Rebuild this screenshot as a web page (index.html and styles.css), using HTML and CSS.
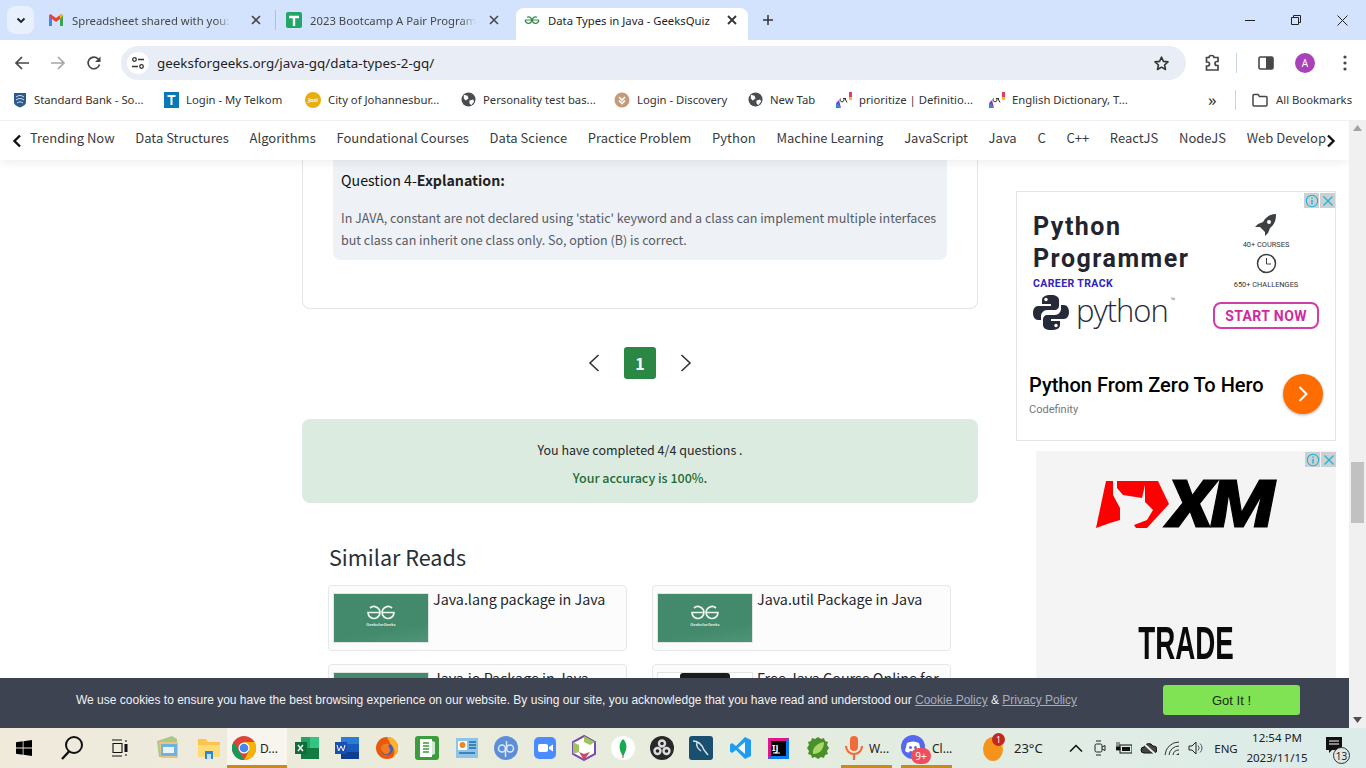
FILE: index.html
```html
<!DOCTYPE html>
<html lang="en">
<head>
<meta charset="utf-8">
<title>Data Types in Java - GeeksQuiz</title>
<link rel="stylesheet" href="styles.css">
</head>
<body>
<div class="window">
  <header class="tabstrip">
    <div class="tab-menu"><svg width="12" height="12" viewBox="0 0 12 12"><path d="M2.500 4.500 6 8l3.500-3.500" fill="none" stroke="#1f1f1f" stroke-width="1.800"/></svg></div>
    <div class="tab tab-one">
      <svg class="fav" width="16" height="16" viewBox="0 0 16 16"><path d="M1 3.500V14h3V7l4 3 4-3v7h3V3.500L13.500 2 8 6 2.500 2z" fill="#ea4335"/><path d="M1 3.500V14h3V7z" fill="#4285f4"/><path d="M15 3.500V14h-3V7z" fill="#34a853"/><path d="M12 7V3.100L13.500 2 15 3.500 12 7z" fill="#fbbc04"/></svg>
      <span class="tab-title fade">Spreadsheet shared with you: "2</span>
      <svg class="tab-x" width="10" height="10" viewBox="0 0 10 10"><path d="M1 1l8 8M9 1 1 9" stroke="#474747" stroke-width="1.600"/></svg>
    </div>
    <div class="tab-sep"></div>
    <div class="tab tab-two">
      <svg class="fav" width="16" height="16" viewBox="0 0 16 16"><rect width="16" height="16" rx="2" fill="#23a566"/><path d="M3 5h10M8 5v9" stroke="#fff" stroke-width="2.400"/></svg>
      <span class="tab-title fade">2023 Bootcamp A Pair Program</span>
      <svg class="tab-x" width="10" height="10" viewBox="0 0 10 10"><path d="M1 1l8 8M9 1 1 9" stroke="#474747" stroke-width="1.600"/></svg>
    </div>
    <div class="tab tab-active">
      <svg class="fav" width="16" height="16" viewBox="0 0 16 16"><g fill="none" stroke="#2f8d46" stroke-width="1.200"><path d="M3 5.300A3.200 3.200 0 1 1 1.300 8h6.200M13 5.300A3.200 3.200 0 1 0 14.700 8H8.500"/></g></svg>
      <span class="tab-title dark">Data Types in Java - GeeksQuiz</span>
      <svg class="tab-x" width="10" height="10" viewBox="0 0 10 10"><path d="M1 1l8 8M9 1 1 9" stroke="#333" stroke-width="1.800"/></svg>
    </div>
    <svg class="tab-plus" width="12" height="12" viewBox="0 0 12 12"><path d="M6 1v10M1 6h10" stroke="#333" stroke-width="1.500"/></svg>
    <div class="win-controls">
      <svg width="10" height="10" viewBox="0 0 10 10"><path d="M0 5.500h10" stroke="#222"/></svg>
      <svg width="10" height="10" viewBox="0 0 10 10"><path d="M.5 2.500h7v7h-7zM2.500 2.500V.5h7v7h-2" fill="none" stroke="#222"/></svg>
      <svg width="11" height="11" viewBox="0 0 11 11"><path d="M.5.5l10 10M10.500.5l-10 10" stroke="#222"/></svg>
    </div>
  </header>

  <nav class="toolbar">
    <svg class="tool" width="16" height="16" viewBox="0 0 16 16"><path d="M15 8H2M8 2 2 8l6 6" fill="none" stroke="#474747" stroke-width="1.700"/></svg>
    <svg class="tool" width="16" height="16" viewBox="0 0 16 16"><path d="M1 8h13M8 2l6 6-6 6" fill="none" stroke="#a5a7ab" stroke-width="1.700"/></svg>
    <svg class="tool" width="16" height="16" viewBox="0 0 16 16"><path d="M13.500 9.500A5.800 5.800 0 1 1 12 3.800L14 6" fill="none" stroke="#474747" stroke-width="1.700"/><path d="M14.500 1.500V7H9z" fill="#474747"/></svg>
    <div class="omnibox">
      <span class="site-chip"><svg width="14" height="14" viewBox="0 0 14 14"><g fill="none" stroke="#333" stroke-width="1.300"><circle cx="3.500" cy="3.500" r="1.800"/><path d="M7 3.500h6M1 10.500h6"/><circle cx="10.500" cy="10.500" r="1.800"/></g></svg></span>
      <span class="url">geeksforgeeks.org/java-gq/data-types-2-gq/</span>
      <svg class="star" width="17" height="17" viewBox="0 0 24 24"><path d="m12 3 2.700 6 6.500.7-4.900 4.400 1.400 6.400L12 17.200l-5.700 3.300 1.400-6.400-4.900-4.400 6.500-.7z" fill="none" stroke="#333" stroke-width="2.200" stroke-linejoin="round"/></svg>
    </div>
    <svg class="ext" width="18" height="18" viewBox="0 0 18 18"><path d="M6 3.500a2.500 2 0 0 1 5 0H15v4h-1a2 2 0 0 0 0 4h1v4.500H3.500V12h1a2 2 0 0 0 0-4h-1V3.500z" fill="none" stroke="#474747" stroke-width="1.700"/></svg>
    <span class="tool-sep"></span>
    <svg class="panel" width="16" height="16" viewBox="0 0 16 16"><rect x="1" y="2" width="14" height="12" rx="1.500" fill="none" stroke="#474747" stroke-width="1.600"/><rect x="8" y="2" width="7" height="12" fill="#474747"/></svg>
    <span class="avatar">A</span>
    <svg class="dots" width="4" height="16" viewBox="0 0 4 16"><g fill="#474747"><circle cx="2" cy="2" r="1.600"/><circle cx="2" cy="8" r="1.600"/><circle cx="2" cy="14" r="1.600"/></g></svg>
  </nav>

  <div class="bookmarks">
    <span class="bm bm1"><svg width="16" height="16" viewBox="0 0 16 16"><path d="M2 1h12v9c0 3-3 4-6 5.500C5 14 2 13 2 10z" fill="#2d5a8c"/><path d="M4 5c3-2 5-2 8 0M4 8c3-2 5-2 8 0M5 11c2-1.500 4-1.500 6 0" stroke="#cfe0ef" fill="none"/></svg>Standard Bank - So...</span>
    <span class="bm bm2"><svg width="15" height="16" viewBox="0 0 15 16"><rect width="15" height="16" fill="#0878b8"/><path d="M3.500 4h8M7.500 4v9" stroke="#fff" stroke-width="2"/></svg>Login - My Telkom</span>
    <span class="bm bm3"><span class="jozi">Jozi</span>City of Johannesbur...</span>
    <span class="bm bm4"><svg width="15" height="15" viewBox="0 0 16 16"><circle cx="8" cy="8" r="7.500" fill="#4a4d50"/><path d="M3 3l4 1 1 3-3 2-2-2zM9 9l4-1 1 2-3 4-2-2z" fill="#fff"/></svg>Personality test bas...</span>
    <span class="bm bm5"><svg width="16" height="16" viewBox="0 0 16 16"><circle cx="8" cy="8" r="7.500" fill="#c49a78"/><path d="M5 5l3 3 3-3M5 8.500l3 3 3-3" stroke="#fff" stroke-width="1.600" fill="none"/></svg>Login - Discovery</span>
    <span class="bm bm6"><svg width="15" height="15" viewBox="0 0 16 16"><circle cx="8" cy="8" r="7.500" fill="#4a4d50"/><path d="M3 3l4 1 1 3-3 2-2-2zM9 9l4-1 1 2-3 4-2-2z" fill="#fff"/></svg>New Tab</span>
    <span class="bm bm7"><svg width="16" height="16" viewBox="0 0 16 16"><path d="M0 16v-5l5 5z" fill="#1a8fd8"/><path d="M0 11l3-3 2 8z" fill="#7a3ec0"/><path d="M13 0h3v5h-3z" fill="#e83a5c"/><path d="M13 5h3v3h-3z" fill="#f0c020"/><path d="M4.500 6.500a2 2 0 1 0 3 0M7 6.500h3M9 6.500l2 4" fill="none" stroke="#333"/></svg>prioritize | Definitio...</span>
    <span class="bm bm8"><svg width="16" height="16" viewBox="0 0 16 16"><path d="M0 16v-5l5 5z" fill="#1a8fd8"/><path d="M0 11l3-3 2 8z" fill="#7a3ec0"/><path d="M13 0h3v5h-3z" fill="#e83a5c"/><path d="M13 5h3v3h-3z" fill="#f0c020"/><path d="M4.500 6.500a2 2 0 1 0 3 0M7 6.500h3M9 6.500l2 4" fill="none" stroke="#333"/></svg>English Dictionary, T...</span>
    <span class="bm-more">»</span>
    <span class="bm-sep"></span>
    <span class="bm bm-all"><svg width="16" height="14" viewBox="0 0 16 14"><path d="M1 2.500a1 1 0 0 1 1-1h4l1.500 2H14a1 1 0 0 1 1 1V12a1 1 0 0 1-1 1H2a1 1 0 0 1-1-1z" fill="none" stroke="#474747" stroke-width="1.500"/></svg>All Bookmarks</span>
  </div>

  <div class="page">
    <div class="page-main">
      <div class="topnav">
        <svg class="nav-arrow" width="10" height="14" viewBox="0 0 10 14"><path d="M8 1.500 2.500 7 8 12.500" fill="none" stroke="#111" stroke-width="2.400"/></svg>
        <div class="nav-items">
          <span>Trending Now</span><span>Data Structures</span><span>Algorithms</span><span>Foundational Courses</span><span>Data Science</span><span>Practice Problem</span><span>Python</span><span>Machine Learning</span><span>JavaScript</span><span>Java</span><span>C</span><span>C++</span><span>ReactJS</span><span>NodeJS</span><span>Web Development</span>
        </div>
        <svg class="nav-arrow" width="10" height="14" viewBox="0 0 10 14"><path d="M2 1.500 7.500 7 2 12.500" fill="none" stroke="#111" stroke-width="2.400"/></svg>
      </div>
      <div class="content">
        <main class="center">
          <section class="card">
            <div class="explain">
              <h3>Question 4-<b>Explanation:</b></h3>
              <p>In JAVA, constant are not declared using 'static' keyword and a class can implement multiple interfaces but class can inherit one class only. So, option (B) is correct.</p>
            </div>
          </section>
          <div class="pager">
            <span class="pg-arrow"><svg width="12" height="20" viewBox="0 0 12 20"><path d="M10.500 2 2 10l8.500 8" fill="none" stroke="#333" stroke-width="1.600"/></svg></span>
            <span class="pg-num">1</span>
            <span class="pg-arrow"><svg width="12" height="20" viewBox="0 0 12 20"><path d="M1.500 2 10 10l-8.500 8" fill="none" stroke="#333" stroke-width="1.600"/></svg></span>
          </div>
          <div class="result">
            <p>You have completed 4/4 questions .</p>
            <p class="acc">Your accuracy is 100%.</p>
          </div>
          <section class="similar">
            <h2>Similar Reads</h2>
            <div class="sim-grid">
              <article class="sim"><div class="thumb"><svg width="30" height="15" viewBox="0 0 30 15"><g fill="none" stroke="#eef6f1" stroke-width="1.700"><path d="M4 3A6 6 0 1 1 2 7.500h12M26 3a6 6 0 1 0 2 4.500H16"/></g></svg><span class="thumb-cap">GeeksforGeeks</span></div><h4>Java.lang package in Java</h4></article>
              <article class="sim"><div class="thumb"><svg width="30" height="15" viewBox="0 0 30 15"><g fill="none" stroke="#eef6f1" stroke-width="1.700"><path d="M4 3A6 6 0 1 1 2 7.500h12M26 3a6 6 0 1 0 2 4.500H16"/></g></svg><span class="thumb-cap">GeeksforGeeks</span></div><h4>Java.util Package in Java</h4></article>
              <article class="sim"><div class="thumb"></div><h4>Java.io Package in Java</h4></article>
              <article class="sim"><div class="thumb thumb-light"><span class="dark-block"></span></div><h4>Free Java Course Online for</h4></article>
            </div>
          </section>
        </main>
        <aside class="ads">
          <div class="ad ad-one">
            <div class="ad-badges"><span class="ad-b"><svg width="14" height="14" viewBox="0 0 14 14"><circle cx="7" cy="7" r="5.700" fill="none" stroke="#1bb3d6" stroke-width="1.100"/><path d="M7 6v4.500M7 3.500v1.200" stroke="#1bb3d6" stroke-width="1.400"/></svg></span><span class="ad-b"><svg width="12" height="12" viewBox="0 0 12 12"><path d="M1.500 1.500l9 9M10.500 1.500l-9 9" stroke="#1bb3d6" stroke-width="1.300"/></svg></span></div>
            <div class="ad-art">
              <div class="art-left">
                <div class="art-head">Python<br>Programmer</div>
                <div class="art-track">CAREER TRACK</div>
                <div class="art-logo">
                  <svg width="36" height="37" viewBox="0 0 36 37"><path d="M18 1c-6 0-9 2-9 5v4h9v2H5c-3 0-5 3-5 7s2 7 5 7h3v-4c0-3 3-6 6-6h8c2 0 4-2 4-4V6c0-3-3-5-8-5z" fill="#262b3a"/><path d="M18 36c6 0 9-2 9-5v-4h-9v-2h13c3 0 5-3 5-7s-2-7-5-7h-3v4c0 3-3 6-6 6h-8c-2 0-4 2-4 4v6c0 3 3 5 8 5z" fill="#262b3a"/><circle cx="13" cy="5.500" r="1.700" fill="#fff"/><circle cx="23" cy="31.500" r="1.700" fill="#fff"/></svg>
                  <span class="art-word">python<sup>™</sup></span>
                </div>
              </div>
              <div class="art-right">
                <svg width="22" height="22" viewBox="0 0 22 22"><path d="M21 0c-6 0-10 3-13 8L3 10l-3 3 5 0 5 5v4l3-3 2-5c4-3 6-7 6-14z" fill="#3c4043"/><circle cx="14" cy="8" r="2" fill="#fff"/></svg>
                <span class="art-small first">40+ COURSES</span>
                <svg class="art-clock" width="21" height="21" viewBox="0 0 21 21"><circle cx="10.500" cy="10.500" r="9" fill="none" stroke="#3c4043" stroke-width="1.500"/><path d="M10.500 5v6H15" fill="none" stroke="#3c4043"/></svg>
                <span class="art-small second">650+ CHALLENGES</span>
                <span class="art-btn">START NOW</span>
              </div>
            </div>
            <div class="ad-foot">
              <div class="foot-text"><div class="foot-title">Python From Zero To Hero</div><div class="foot-sub">Codefinity</div></div>
              <span class="foot-go"><svg width="12" height="20" viewBox="0 0 12 20"><path d="M2.500 3 9.500 10l-7 7" fill="none" stroke="#fff" stroke-width="2"/></svg></span>
            </div>
          </div>
          <div class="ad ad-two">
            <div class="ad-badges"><span class="ad-b"><svg width="14" height="14" viewBox="0 0 14 14"><circle cx="7" cy="7" r="5.700" fill="none" stroke="#1bb3d6" stroke-width="1.100"/><path d="M7 6v4.500M7 3.500v1.200" stroke="#1bb3d6" stroke-width="1.400"/></svg></span><span class="ad-b"><svg width="12" height="12" viewBox="0 0 12 12"><path d="M1.500 1.500l9 9M10.500 1.500l-9 9" stroke="#1bb3d6" stroke-width="1.300"/></svg></span></div>
            <div class="xm">
              <svg width="74" height="47" viewBox="0 0 74 47"><path d="M10 0h7v14l7 13v12l-10 3-14 5z" fill="#f00"/><path d="M21 0h41l11 23-22 24H40l-2-3 13-5 6-10-8-8V4l-3 13-19-3-6-7z" fill="#f00"/></svg>
              <span class="xm-word">XM</span>
            </div>
            <div class="trade"><span>TRADE</span></div>
          </div>
        </aside>
      </div>
    </div>
    <div class="scrollbar">
      <svg width="9" height="6" viewBox="0 0 9 6"><path d="M4.500 0 9 6H0z" fill="#a3a3a3"/></svg>
      <span class="thumb-bar"></span>
      <svg class="sb-down" width="9" height="6" viewBox="0 0 9 6"><path d="M4.500 6 9 0H0z" fill="#505050"/></svg>
    </div>
    <div class="cookie">
      <p>We use cookies to ensure you have the best browsing experience on our website. By using our site, you acknowledge that you have read and understood our <a>Cookie Policy</a> &amp; <a>Privacy Policy</a></p>
      <span class="got">Got It !</span>
    </div>
  </div>

  <footer class="taskbar">
    <div class="tb-slot s-win"><svg width="16" height="16" viewBox="0 0 16 16"><path d="M0 2.300 6.700 1.300v6.200H0zM7.500 1.200 16 0v7.500H7.500zM0 8.500h6.700v6.200L0 13.700zM7.500 8.500H16V16l-8.500-1.200z" fill="#000"/></svg></div>
    <div class="tb-slot s-48"><svg width="24" height="26" viewBox="0 0 24 26"><circle cx="14" cy="10" r="8" fill="none" stroke="#111" stroke-width="2"/><path d="M9 16.500 2 24" stroke="#111" stroke-width="2.400"/></svg></div>
    <div class="tb-slot s-48"><svg width="16" height="18" viewBox="0 0 16 18"><g fill="none" stroke="#111" stroke-width="1.100"><path d="M0 1h10M0 17h10M1 4.500h9v9H1zM14 1v2M14 15v2"/></g><rect x="12.500" y="5" width="3" height="8" fill="#111"/></svg></div>
    <div class="tb-slot s-47"><svg width="24" height="24" viewBox="0 0 24 24"><path d="M1 5 16 0l5 3v18H3z" fill="#a9c98c"/><path d="M3 6h19v16H5z" fill="#ebc47d"/><rect x="5" y="8" width="16" height="12" fill="#6db2e0"/><path d="M7 11h11v6H7z" fill="#e9f3fb"/></svg></div>
    <div class="tb-slot s-38"><svg width="22" height="22" viewBox="0 0 22 22"><path d="M0 2h8l2 3h12v15H0z" fill="#fcc44c"/><path d="M0 8h22v12H0z" fill="#fedb74"/><path d="M7 14h8v8H7z" fill="#2d87d2"/><path d="M9 17h4v5H9z" fill="#bfe0f8"/></svg></div>
    <div class="tb-active tb-chrome">
      <svg width="24" height="24" viewBox="0 0 24 24"><circle cx="12" cy="12" r="12" fill="#db4437"/><path d="M12 24A12 12 0 0 1 1.600 6L7 15.500z" fill="#0f9d58"/><path d="M12 24a12 12 0 0 0 10.400-18H12l5 9z" fill="#f4b400"/><circle cx="12" cy="12" r="5.500" fill="#fff"/><circle cx="12" cy="12" r="4.300" fill="#4285f4"/></svg>
      <span>D...</span>
    </div>
    <div class="tb-slot s-40"><svg width="24" height="24" viewBox="0 0 24 24"><rect x="6" y="1" width="18" height="22" fill="#21a366"/><rect x="15" y="1" width="9" height="11" fill="#33c481"/><rect x="6" y="12" width="18" height="11" fill="#107c41"/><rect y="6" width="12" height="12" fill="#0e6e39"/><path d="M3 9l5 6M8 9l-5 6" stroke="#fff" stroke-width="1.400"/></svg></div>
    <div class="tb-slot s-40"><svg width="24" height="24" viewBox="0 0 24 24"><rect x="6" y="1" width="18" height="22" fill="#2b7cd3"/><rect x="6" y="8" width="18" height="8" fill="#185abd"/><rect x="6" y="16" width="18" height="7" fill="#103f91"/><rect y="6" width="12" height="12" fill="#1a4fb0"/><path d="M2 9l1.700 6L6 10l2.300 5L10 9" stroke="#fff" fill="none"/></svg></div>
    <div class="tb-slot s-40"><svg width="24" height="24" viewBox="0 0 24 24"><circle cx="12" cy="12" r="11" fill="#e8590c"/><path d="M12 1a11 11 0 0 1 11 11c0 4-2 8-6 10 4-4 3-10-1-13z" fill="#ffb02e"/><circle cx="12" cy="13" r="6" fill="#3d5fb5"/><path d="M6 13c0-5 5-7 9-5-2 1-2 3 0 5 1 3-2 6-5 5-2-1-4-3-4-5z" fill="#f47a21"/></svg></div>
    <div class="tb-slot s-40"><svg width="24" height="24" viewBox="0 0 24 24"><rect width="24" height="24" rx="3" fill="#3d9c3d"/><rect x="5" y="3" width="12" height="18" fill="#fff"/><path d="M8 7h6M8 10h6M8 13h6M8 16h6" stroke="#3d9c3d" stroke-width="1.500"/><path d="M17 5l3 1v12l-3 1z" fill="#cfe8cf"/></svg></div>
    <div class="tb-slot s-39"><svg width="22" height="22" viewBox="0 0 22 22"><rect y="1" width="22" height="20" fill="#8ec5e6"/><rect x="2" y="4" width="9" height="9" fill="#fff"/><circle cx="6.500" cy="8" r="3" fill="#e68a2e"/><path d="M13 5h7M13 8h7M13 11h7M3 16h16" stroke="#1d6fb0" stroke-width="1.500"/></svg></div>
    <div class="tb-slot s-39"><svg width="24" height="24" viewBox="0 0 24 24"><circle cx="12" cy="12" r="12" fill="#5d8fd8"/><g fill="none" stroke="#dbe8fa" stroke-width="1.500"><circle cx="8" cy="12.500" r="3.500"/><path d="M11.500 11v10"/><circle cx="16" cy="12.500" r="3.500"/><path d="M12.500 5v9"/></g></svg></div>
    <div class="tb-slot s-39"><svg width="22" height="22" viewBox="0 0 22 22"><rect width="22" height="22" rx="5" fill="#4a8cff"/><rect x="4" y="7" width="10" height="8" rx="2" fill="#fff"/><path d="M15 10l4-2.500v7L15 12z" fill="#fff"/></svg></div>
    <div class="tb-slot s-39"><svg width="24" height="26" viewBox="0 0 24 26"><path d="M12 1 23 7v12l-11 6L1 19V7z" fill="#fff" stroke="#7b4bb0" stroke-width="2"/><path d="M12 1 23 7l-5 3-6-3z" fill="#9ec55a"/><path d="M1 7l6 3v7l-6 2z" fill="#9ec55a"/><path d="M12 25l-5-8 5 2 6-2z" fill="#c84a5a"/></svg></div>
    <div class="tb-slot s-39"><svg width="24" height="24" viewBox="0 0 24 24"><circle cx="12" cy="12" r="12" fill="#fff"/><path d="M12 3c4 4 5 10 0 17-5-7-4-13 0-17z" fill="#13aa52"/><path d="M12 18v4" stroke="#7b5c3d"/></svg></div>
    <div class="tb-slot s-39"><svg width="24" height="24" viewBox="0 0 24 24"><circle cx="12" cy="12" r="12" fill="#282828"/><g fill="none" stroke="#ddd" stroke-width="2.400"><circle cx="12" cy="7.500" r="3"/><circle cx="7.500" cy="15" r="3"/><circle cx="16.500" cy="15" r="3"/></g></svg></div>
    <div class="tb-slot s-39"><svg width="24" height="24" viewBox="0 0 24 24"><rect width="24" height="24" rx="3" fill="#1a4f70"/><path d="M4 5c5 0 9 4 11 9l4 5M8 6c-1 4 1 7 4 9" fill="none" stroke="#d8e6ee" stroke-width="1.400"/></svg></div>
    <div class="tb-slot s-39"><svg width="24" height="26" viewBox="0 0 24 24"><path d="M17 1 23 4v16l-6 3-9-9-4 3-2-1.500V8.500L4 7l4 3z" fill="#1f9cf0"/><path d="M17 6v12l-7-6z" fill="#f3f8fc"/></svg></div>
    <div class="tb-slot s-39"><svg width="21" height="21" viewBox="0 0 21 21"><rect width="21" height="21" fill="#e0178c"/><path d="M0 21 21 0v21z" fill="#087cfa"/><rect x="3" y="3" width="15" height="15" fill="#000"/><path d="M5 15h7" stroke="#fff"/></svg><span class="ij">IJ</span></div>
    <div class="tb-slot s-39"><svg width="24" height="24" viewBox="0 0 24 24"><path d="M12 1l3 2 3-1 1 3 3 1-1 3 2 3-2 3 1 3-3 1-1 3-3-1-3 2-3-2-3 1-1-3-3-1 1-3-2-3 2-3-1-3 3-1 1-3 3 1z" fill="#4a8f2a"/><path d="M7 18c-1-6 4-11 11-12 0 7-4 12-11 12z" fill="#a9d86a"/></svg></div>
    <div class="tb-active tb-mic">
      <svg width="20" height="26" viewBox="0 0 20 26"><rect x="6" y="1" width="8" height="15" rx="4" fill="#f26b3a"/><path d="M2 11a8 8 0 0 0 16 0M10 19v6" fill="none" stroke="#f26b3a" stroke-width="2.200"/></svg>
      <span>W...</span>
    </div>
    <div class="tb-active tb-disc">
      <svg class="disc" width="26" height="26" viewBox="0 0 26 26"><circle cx="12" cy="12" r="12" fill="#5568ee"/><path d="M6 8c4-2 8-2 12 0l2 8c-1.500 1-3 1.500-4 1.500l-1-1.500c-2 .5-4 .5-6 0l-1 1.500c-1 0-2.500-.5-4-1.500z" fill="#fff"/><circle cx="9.500" cy="12.500" r="1.500" fill="#5568ee"/><circle cx="14.500" cy="12.500" r="1.500" fill="#5568ee"/></svg>
      <span class="disc-badge">9+</span>
      <span>Cl...</span>
    </div>
    <div class="weather">
      <svg width="24" height="26" viewBox="0 0 24 26"><ellipse cx="11" cy="14" rx="10" ry="12" fill="#f5941d"/><path d="M11 2c6 0 10 6 10 12-3-6-7-10-10-12z" fill="#f7c235"/></svg>
      <span class="w-badge">1</span>
      <span class="temp">23°C</span>
    </div>
    <div class="tray">
      <span class="tray-i"><svg width="14" height="8" viewBox="0 0 14 8"><path d="M1 7.500 7 1.500l6 6" fill="none" stroke="#111" stroke-width="1.500"/></svg></span>
      <span class="tray-i"><svg width="12" height="18" viewBox="0 0 12 18"><rect x="1" y="5" width="7" height="8" rx="1.500" fill="none" stroke="#222"/><path d="M8 8l3-1.500v5L8 10M2 2h5M2 16h5" fill="none" stroke="#222"/></svg></span>
      <span class="tray-i"><svg width="16" height="14" viewBox="0 0 16 14"><rect x="4" y="4" width="12" height="8" fill="none" stroke="#111"/><rect x="6" y="6" width="8" height="4" fill="#111"/><path d="M1 1v5M3 1v5M0 6h4v3H0z" fill="#111" stroke="#111" stroke-width=".8"/></svg></span>
      <span class="tray-i"><svg width="17" height="14" viewBox="0 0 17 14"><path d="M4 12a3 3 0 0 1 0-6 5 5 0 0 1 9-1 3.500 3.500 0 0 1 1 7z" fill="#444" stroke="#111"/><path d="M2 1l13 12" stroke="#eee" stroke-width="1.800"/></svg></span>
      <span class="tray-i"><svg width="16" height="15" viewBox="0 0 16 15"><g fill="none" stroke="#333"><path d="M15 1A14 14 0 0 0 1 14M15 5A10 10 0 0 0 5 14M15 9a6 6 0 0 0-6 5"/></g><path d="M15 12v2h-3z" fill="#333"/></svg></span>
      <span class="tray-i"><svg width="16" height="16" viewBox="0 0 16 16"><path d="M1 6h3l4-4v12l-4-4H1z" fill="none" stroke="#222"/><path d="M10 5.500a3.500 3.500 0 0 1 0 5M12 3.500a6 6 0 0 1 0 9" fill="none" stroke="#555"/></svg></span>
    </div>
    <span class="lang">ENG</span>
    <div class="clock"><span>12:54 PM</span><span>2023/11/15</span></div>
    <div class="notif">
      <svg width="16" height="16" viewBox="0 0 16 16"><path d="M0 0h16v13H6l-3 3v-3H0z" fill="#111"/><path d="M3 4h10M3 7h10" stroke="#fff"/></svg>
      <span class="notif-n">13</span>
    </div>
  </footer>
</div>
</body>
</html>
```
FILE: styles.css
```css
* { box-sizing: border-box; }
html, body { margin: 0; padding: 0; height: 100%; overflow: hidden; }
body { font-family: "Noto Sans", "Open Sans", sans-serif; color: #202124; background: #fff; }
p, h2, h3, h4 { margin: 0; font-weight: 400; }
svg { display: block; flex: none; }

.window { width: 1366px; height: 768px; display: flex; flex-direction: column; }

/* tab strip */
.tabstrip { height: 40px; background: #d3e3fd; display: flex; align-items: flex-end; padding-left: 7px; flex: none; }
.tab-menu { width: 27px; height: 28px; margin-bottom: 6px; background: #e8f0fe; border-radius: 8px; display: flex; align-items: center; justify-content: center; }
.tab { height: 32px; display: flex; align-items: center; font-size: 11.300px; padding-bottom: 8px; flex: none; }
.tab-one { width: 235px; padding-left: 8px; margin-left: 6px; }
.tab-two { width: 240px; padding-left: 10px; }
.tab .fav { margin-right: 8px; }
.tab-title { width: 160px; white-space: nowrap; overflow: hidden; color: #444746; }
.tab-two .tab-title { width: 166px; }
.tab-title.fade { -webkit-mask-image: linear-gradient(90deg, #000 90%, transparent); mask-image: linear-gradient(90deg, #000 90%, transparent); }
.tab-title.dark { color: #1f1f1f; width: 170px; }
.tab-x { margin-left: 19px; }
.tab-two .tab-x { margin-left: 13px; }
.tab-active .tab-x { margin-left: 9px; }
.tab-sep { width: 1px; height: 20px; background: #a7c0e6; margin-bottom: 10px; flex: none; }
.tab-active { width: 232px; padding-left: 8px; background: #fff; border-radius: 8px 8px 0 0; }
.tab-plus { margin: 0 0 14px 14px; }
.win-controls { margin-left: auto; display: flex; align-items: center; gap: 36px; height: 40px; padding-right: 18px; width: 118px; justify-content: flex-end; }

/* toolbar */
.toolbar { height: 40px; background: #fff; border-radius: 8px 8px 0 0; display: flex; align-items: center; padding-left: 14px; flex: none; }
.tool { margin-right: 20px; }
.omnibox { width: 1065px; height: 34px; margin: 6px 0 0 -1px; background: #e9eef6; border-radius: 17px; display: flex; align-items: center; padding: 0 16px 0 6px; }
.toolbar > svg, .toolbar > span { margin-top: 6px; }
.site-chip { width: 22px; height: 22px; border-radius: 50%; background: #fff; display: flex; align-items: center; justify-content: center; }
.url { margin-left: 8px; font-size: 13.400px; color: #1f1f1f; flex: 1; }
.ext { margin-left: 17px; }
.tool-sep { width: 1px; height: 20px; background: #c9d7ec; margin-left: 15px; }
.panel { margin-left: 21px; }
.avatar { width: 20px; height: 20px; border-radius: 50%; background: #a942b8; color: #fff; font-size: 10px; display: flex; align-items: center; justify-content: center; margin-left: 21px; }
.dots { margin-left: 28px; }

/* bookmarks */
.bookmarks { height: 40px; background: #fff; display: flex; align-items: center; font-size: 11.300px; color: #333; flex: none; padding-bottom: 1px; }
.bm { display: flex; align-items: center; gap: 7px; white-space: nowrap; flex: none; }
.bm1 { width: 152px; margin-left: 12px; gap: 6px; }
.bm2 { width: 141px; }
.bm3 { width: 156px; }
.jozi { width: 16px; height: 16px; border-radius: 50%; background: #e8ae0c; color: #fff; font-size: 5.500px; font-weight: 700; display: flex; align-items: center; justify-content: center; flex: none; }
.bm4 { width: 153px; }
.bm5 { width: 134px; }
.bm6 { width: 88px; }
.bm7 { width: 153px; }
.bm8 { width: 219px; }
.bm-more { width: 16px; font-size: 17px; line-height: 18px; color: #333; flex: none; }
.bm-sep { width: 1px; height: 20px; background: #c9d7ec; margin-left: 11px; flex: none; }
.bm-all { margin-left: 16px; gap: 8px; }

/* page */
.page { position: relative; height: 608px; display: flex; overflow: hidden; flex: none; font-family: "Noto Sans CJK SC", "Noto Sans", sans-serif; }
.page-main { flex: 1; min-width: 0; display: flex; flex-direction: column; }
.topnav { height: 40px; flex: none; display: flex; align-items: center; background: #fff; padding-left: 12px; box-shadow: 0 2px 10px rgba(0,0,0,.08); position: relative; z-index: 2; border-top: 1px solid #f0f0f0; }
.nav-arrow { margin-top: 1px; }
.nav-items { display: flex; gap: 20.700px; font-size: 13px; line-height: 20px; color: #373c43; margin: -6px 0 0 8px; width: 1296px; overflow: hidden; white-space: nowrap; }
.nav-items span { flex: none; }
.content { flex: 1; display: flex; padding-left: 302px; min-height: 0; }
.center { width: 676px; flex: none; }

.card { height: 149px; padding: 0 30px; border: 1px solid #e2e4e8; border-top: 0; border-radius: 0 0 8px 8px; }
.explain { height: 100px; width: 614px; background: #eef1f5; border-radius: 0 0 8px 8px; padding: 9px 8px; }
.explain h3 { font-size: 14.200px; line-height: 22px; color: #111; }
.explain b { font-weight: 700; color: #222; }
.explain p { margin-top: 16px; font-size: 12.520px; line-height: 22px; color: #555c66; }

.pager { height: 32px; margin-top: 38px; display: flex; justify-content: center; align-items: center; gap: 24px; }
.pg-arrow { width: 12px; display: flex; }
.pg-num { width: 32px; height: 32px; background: #2a8744; border-radius: 3px; color: #fff; font-weight: 700; font-size: 16px; display: flex; align-items: center; justify-content: center; }

.result { height: 84px; margin-top: 40px; background: #dcebdf; border-radius: 8px; text-align: center; font-size: 12.500px; line-height: 28px; padding-top: 17px; color: #24282e; }
.result .acc { color: #1e6b35; font-weight: 500; }

.similar { padding: 0 27px 0 26px; margin-top: 37px; }
.similar h2 { font-size: 21.600px; line-height: 34px; color: #2a2f36; padding-left: 1px; }
.sim-grid { margin-top: 11px; display: grid; grid-template-columns: 299px 299px; column-gap: 25px; row-gap: 13px; }
.sim { height: 66px; border: 1px solid #e6e7ea; border-radius: 4px; background: #fcfcfc; display: flex; padding: 7px 4px; gap: 4px; }
.sim h4 { font-size: 14.300px; line-height: 16px; color: #23272d; white-space: nowrap; margin-top: -2px; }
.thumb { width: 96px; height: 50px; background: linear-gradient(170deg, #43896b 70%, #4f9478); border: 1px solid #e2e4e4; display: flex; flex-direction: column; align-items: center; justify-content: flex-start; padding-top: 11px; flex: none; }
.thumb-cap { font-size: 4px; line-height: 5px; margin-top: 2px; font-weight: 700; color: #e8f2ec; font-family: "Liberation Sans", sans-serif; }
.thumb-light { background: #fff; padding-top: 0; }
.dark-block { width: 50px; height: 50px; background: #1b1b1b; border-radius: 3px; }

/* ads */
.ads { width: 320px; margin-left: 38px; padding-top: 31px; display: flex; flex-direction: column; align-items: flex-end; gap: 10px; }
.ad { position: relative; flex: none; }
.ad-badges { position: absolute; top: 1px; right: 0; display: flex; gap: 1px; }
.ad-b { width: 15px; height: 15px; background: #cdd0d2; display: flex; align-items: center; justify-content: center; }
.ad-one { width: 320px; height: 250px; border: 1px solid #e3e3e3; background: #fff; font-family: Roboto, sans-serif; }
.ad-art { display: flex; height: 140px; padding: 19px 0 0 16px; }
.art-left { width: 180px; flex: none; }
.art-head { font-size: 25px; font-weight: 700; line-height: 32px; color: #22252e; letter-spacing: 1.500px; white-space: nowrap; }
.art-track { font-size: 10.500px; font-weight: 700; letter-spacing: .4px; line-height: 12px; margin-top: 3px; color: #3322bb; }
.art-logo { display: flex; align-items: center; gap: 7px; margin-top: 4px; }
.art-word { font-size: 31px; font-weight: 300; line-height: 36px; color: #262b3a; font-family: "Open Sans", sans-serif; letter-spacing: -1px; white-space: nowrap; margin-top: -5px; }
.art-word sup { font-size: 6px; vertical-align: 20px; line-height: 0; margin-left: 3px; }
.art-right { width: 106px; padding-top: 3px; display: flex; flex-direction: column; align-items: center; flex: none; }
.art-small { font-size: 7.400px; line-height: 8px; color: #333; white-space: nowrap; }
.art-small.first { margin-top: 5px; }
.art-small.second { margin-top: 7px; }
.art-clock { margin-top: 4px; }
.art-btn { width: 106px; height: 27px; margin-top: 13px; border: 2px solid #d23ba8; border-radius: 8px; display: flex; align-items: center; justify-content: center; font-size: 14px; font-weight: 700; color: #cf2a9e; letter-spacing: .4px; }
.ad-foot { display: flex; justify-content: space-between; padding: 42px 12px 0 12px; }
.foot-text { margin-top: -1px; }
.foot-title { font-size: 20px; font-weight: 500; line-height: 24px; color: #000; white-space: nowrap; }
.foot-sub { font-size: 11px; line-height: 14px; color: #777; margin-top: 6px; }
.foot-go { width: 40px; height: 40px; border-radius: 50%; background: #ff6d00; display: flex; align-items: center; justify-content: center; box-shadow: 0 1px 3px rgba(0,0,0,.3); }

.ad-two { width: 300px; height: 300px; background: #f4f4f4; padding-top: 30px; display: flex; flex-direction: column; align-items: center; }
.xm { display: flex; align-items: center; height: 47px; }
.xm-word { font-family: Roboto, "Liberation Sans", sans-serif; font-size: 66px; font-weight: 900; font-style: italic; line-height: 47px; color: #000; letter-spacing: -3px; width: 110px; margin-left: -3px; -webkit-text-stroke: 1px #000; transform: scaleX(1.146); transform-origin: left center; }
.trade { margin-top: 90px; font-family: "Liberation Sans", sans-serif; font-size: 47px; font-weight: 700; line-height: 50px; color: #0a0a0a; width: 94px; display: flex; justify-content: center; }
.trade span { display: block; transform: scaleX(.59); }

/* scrollbar */
.scrollbar { width: 17px; flex: none; background: #f0f0f0; display: flex; flex-direction: column; align-items: center; padding: 5px 0; position: relative; z-index: 3; }
.thumb-bar { width: 13px; height: 61px; background: #c1c1c1; margin-top: 331px; }
.sb-down { margin-top: auto; }

/* cookie */
.cookie { position: absolute; left: 0; right: 17px; bottom: 0; height: 50px; background: #3e4351; z-index: 4; display: flex; align-items: center; padding: 0 0 6px 76px; font-family: "Liberation Sans", Arial, sans-serif; font-size: 12px; color: #fff; }
.cookie p { width: 1087px; white-space: nowrap; color: #f1f1f1; }
.cookie a { color: #a9adb8; text-decoration: underline; }
.got { width: 137px; height: 30px; border-radius: 3px; background: #7fe354; color: #1b2a12; font-size: 13px; display: flex; align-items: center; justify-content: center; }

/* taskbar */
.taskbar { height: 40px; flex: none; display: flex; align-items: center; background: linear-gradient(90deg, #f0eadb 0%, #e8ecdc 45%, #dcecea 100%); font-size: 12px; color: #222; }
.tb-slot { height: 40px; display: flex; align-items: center; justify-content: center; flex: none; position: relative; }
.s-win { width: 48px; }
.s-48 { width: 48px; }
.s-47 { width: 47px; }
.s-38 { width: 36px; }
.s-40 { width: 40px; }
.s-39 { width: 39px; }
.ij { position: absolute; font-size: 9px; font-weight: 700; color: #fff; top: 13px; left: 13px; }
.tb-active { height: 40px; display: flex; align-items: center; flex: none; border-bottom: 3px solid #c98a1e; padding-top: 3px; }
.tb-chrome { width: 60px; background: #f7f5ee; padding-left: 5px; gap: 4px; }
.tb-mic { width: 51px; margin-left: 4px; padding-left: 3px; gap: 5px; }
.tb-disc { width: 51px; margin-left: 9px; position: relative; gap: 3px; }
.disc { margin-right: 2px; }
.disc-badge { position: absolute; left: 10px; top: 20px; width: 20px; height: 16px; border-radius: 8px; background: #ee4f5c; color: #fff; font-size: 10px; display: flex; align-items: center; justify-content: center; }
.weather { display: flex; align-items: center; margin-left: 30px; position: relative; height: 40px; gap: 8px; }
.w-badge { position: absolute; left: 10px; top: 5px; width: 13px; height: 13px; border-radius: 50%; background: #c4271d; color: #fff; font-size: 8px; display: flex; align-items: center; justify-content: center; }
.temp { font-size: 13px; width: 32px; white-space: nowrap; }
.tray { display: flex; align-items: center; margin-left: 18px; }
.tray-i { width: 24px; display: flex; justify-content: center; }
.lang { margin-left: 4px; width: 28px; font-size: 11.500px; text-align: center; }
.clock { width: 70px; margin-left: 2px; display: flex; flex-direction: column; align-items: center; font-size: 11.500px; line-height: 20px; }
.notif { margin-left: 14px; position: relative; height: 40px; width: 28px; display: flex; align-items: center; padding-bottom: 6px; }
.notif-n { position: absolute; left: 7px; top: 19px; width: 17px; height: 17px; border-radius: 50%; background: #dfe6e4; border: 1px solid #333; font-size: 10px; display: flex; align-items: center; justify-content: center; }
```
